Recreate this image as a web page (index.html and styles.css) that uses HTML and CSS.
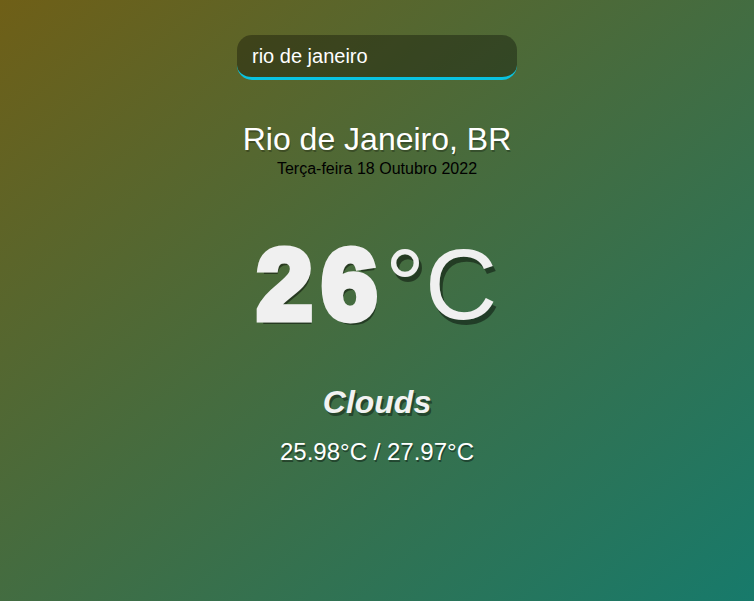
FILE: index.html
```html
<!DOCTYPE html>
<html lang="pt">
<head>
<meta charset="utf-8">
<title>Weather</title>
<link rel="stylesheet" href="styles.css">
</head>
<body>
<main class="app">
  <div class="search-box">
    <input class="search-bar" type="text" value="rio de janeiro">
  </div>
  <section class="location-box">
    <div class="location">Rio de Janeiro, BR</div>
    <div class="date">Terça-feira 18 Outubro 2022</div>
  </section>
  <section class="weather-box">
    <div class="temp"><span class="temp-value">26</span><span class="temp-unit">°C</span></div>
    <div class="weather">Clouds</div>
    <div class="hi-low">25.98°C / 27.97°C</div>
  </section>
</main>
</body>
</html>
```
FILE: styles.css
```css
* { box-sizing: border-box; }
html, body { margin: 0; padding: 0; }
body { font-family: "Liberation Sans", Arial, sans-serif; }
.app {
  min-height: 100vh;
  background: linear-gradient(to bottom right, #6f5f17, #177a6b);
  display: flex;
  flex-direction: column;
  align-items: center;
  padding-top: 35px;
}
.search-box { width: 280px; }
.search-bar {
  display: block;
  width: 100%;
  height: 45px;
  padding: 0 15px;
  font-family: inherit;
  font-size: 20px;
  color: #fff;
  background: rgba(0, 0, 0, 0.33);
  border: none;
  border-bottom: 3px solid #0ac3e0;
  border-radius: 15px;
  outline: none;
}
.location-box { text-align: center; margin-top: 41px; }
.location {
  color: #fff;
  font-size: 32px;
  line-height: 37px;
  text-shadow: 1px 2px rgba(0, 0, 0, 0.25);
}
.date { color: #000; font-size: 16px; line-height: 18px; margin-top: 2px; }
.weather-box { text-align: center; margin-top: 40px; }
.temp {
  color: #f0f0f0;
  font-size: 100px;
  line-height: 133px;
  text-shadow: 3px 5px rgba(0, 0, 0, 0.45);
}
.temp-value {
  font-weight: 900;
  -webkit-text-stroke: 7px #f0f0f0;
  letter-spacing: 9px;
  margin-right: -1px;
}
.temp-unit { font-weight: 400; }
.weather {
  color: #f2f2f2;
  font-size: 32px;
  font-weight: 700;
  font-style: italic;
  line-height: 37px;
  margin-top: 33px;
  text-shadow: 2px 3px rgba(0, 0, 0, 0.4);
}
.hi-low {
  color: #fff;
  font-size: 24px;
  line-height: 28px;
  margin-top: 17px;
  text-shadow: 1px 2px rgba(0, 0, 0, 0.4);
}
```
